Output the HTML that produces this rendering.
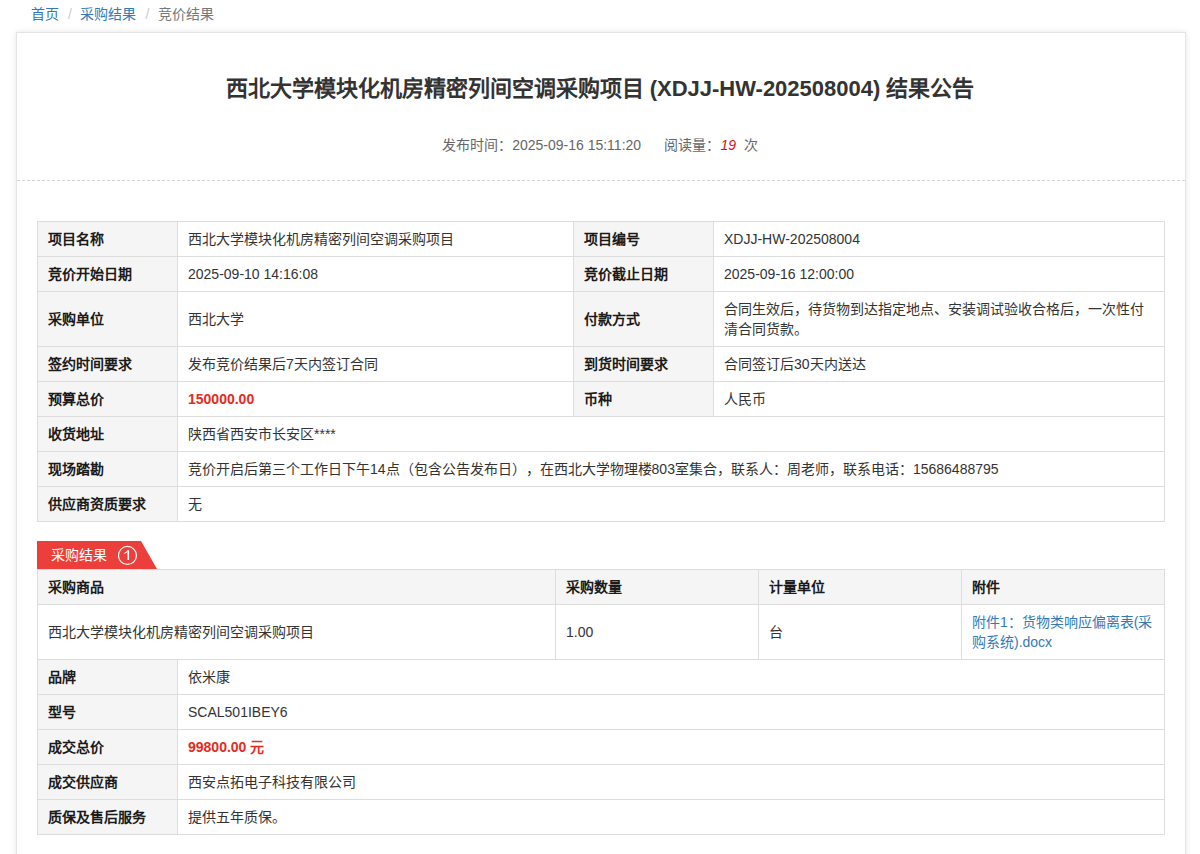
<!DOCTYPE html>
<html lang="zh-CN">
<head>
<meta charset="utf-8">
<style>
*{box-sizing:border-box;}
html,body{margin:0;padding:0;background:#fff;}
body{text-spacing-trim:space-all;font-family:"Liberation Sans",sans-serif;font-size:14px;color:#333;width:1200px;height:854px;overflow:hidden;position:relative;}
.crumb{position:absolute;left:31px;top:4px;font-size:14px;line-height:20px;color:#999;}
.crumb a{color:#337ab7;text-decoration:none;}
.crumb .sep{color:#ccc;padding:0 8.5px 0 9px;}
.crumb .cur{color:#777;}
.box{position:absolute;left:16px;top:32px;width:1170px;height:900px;border:1px solid #e4e4e4;box-shadow:0 0 6px rgba(0,0,0,0.1);background:#fff;}
.title{position:absolute;left:0;right:0;top:73px;text-align:center;font-size:22px;font-weight:bold;color:#333;line-height:32px;}
.meta{position:absolute;left:0;right:0;top:135px;text-align:center;font-size:14px;color:#666;line-height:20px;}
.meta i{color:#d6101a;}
.dash{position:absolute;left:17px;top:180px;width:1168px;border-top:1px dashed #d5d5d5;}
table{position:absolute;border-collapse:collapse;table-layout:fixed;}
td{border:1px solid #ddd;padding:0 10px;font-size:14px;line-height:20px;color:#333;}
td.h{background:#f5f5f5;font-weight:bold;color:#1a1a1a;}
.red{color:#e62a22;font-weight:bold;}
.t1{left:37px;top:221px;width:1128px;}
.tab{position:absolute;left:37px;top:541px;height:28px;}
.t2{left:37px;top:569px;width:1128px;}
.tabtxt{position:absolute;left:51px;top:545px;font-size:14px;line-height:20px;color:#fff;}
.tabnum{position:absolute;left:118px;top:546px;width:19px;text-align:center;font-size:13px;line-height:18px;color:#fff;}
a.lnk{color:#337ab7;text-decoration:none;}
</style>
</head>
<body>
<div class="crumb"><a>首页</a><span class="sep">/</span><a>采购结果</a><span class="sep">/</span><span class="cur">竞价结果</span></div>
<div class="box"></div>
<div class="title">西北大学模块化机房精密列间空调采购项目 (XDJJ-HW-202508004) 结果公告</div>
<div class="meta">发布时间：2025-09-16 15:11:20&nbsp;&nbsp;&nbsp;&nbsp;&nbsp;&nbsp;阅读量：<i>19</i>&nbsp;&nbsp;次</div>
<div class="dash"></div>
<table class="t1">
<colgroup><col style="width:140px"><col style="width:396px"><col style="width:140px"><col></colgroup>
<tr style="height:35px"><td class="h">项目名称</td><td>西北大学模块化机房精密列间空调采购项目</td><td class="h">项目编号</td><td>XDJJ-HW-202508004</td></tr>
<tr style="height:35px"><td class="h">竞价开始日期</td><td>2025-09-10 14:16:08</td><td class="h">竞价截止日期</td><td>2025-09-16 12:00:00</td></tr>
<tr style="height:55px"><td class="h">采购单位</td><td>西北大学</td><td class="h">付款方式</td><td>合同生效后，待货物到达指定地点、安装调试验收合格后，一次性付清合同货款。</td></tr>
<tr style="height:35px"><td class="h">签约时间要求</td><td>发布竞价结果后7天内签订合同</td><td class="h">到货时间要求</td><td>合同签订后30天内送达</td></tr>
<tr style="height:35px"><td class="h">预算总价</td><td><span class="red">150000.00</span></td><td class="h">币种</td><td>人民币</td></tr>
<tr style="height:35px"><td class="h">收货地址</td><td colspan="3">陕西省西安市长安区****</td></tr>
<tr style="height:35px"><td class="h">现场踏勘</td><td colspan="3">竞价开启后第三个工作日下午14点（包含公告发布日），在西北大学物理楼803室集合，联系人：周老师，联系电话：15686488795</td></tr>
<tr style="height:35px"><td class="h">供应商资质要求</td><td colspan="3">无</td></tr>
</table>
<svg class="tab" width="121" height="28" viewBox="0 0 121 28"><polygon points="0,0 104,0 120,28 0,28" fill="#ec3e3a"/><circle cx="90.45" cy="14.45" r="9" fill="none" stroke="#fff" stroke-width="1.2"/><path d="M91.3 9.3 V19" fill="none" stroke="#fff" stroke-width="1.6"/><path d="M91.2 9.5 Q89.8 11.5 87.3 12.4" fill="none" stroke="#fff" stroke-width="1.1"/></svg>
<div class="tabtxt">采购结果</div>
<table class="t2">
<colgroup><col style="width:140px"><col style="width:378px"><col style="width:203px"><col style="width:203px"><col></colgroup>
<tr style="height:35px"><td class="h" colspan="2">采购商品</td><td class="h">采购数量</td><td class="h">计量单位</td><td class="h">附件</td></tr>
<tr style="height:55px"><td colspan="2">西北大学模块化机房精密列间空调采购项目</td><td>1.00</td><td>台</td><td><a class="lnk">附件1：货物类响应偏离表(采购系统).docx</a></td></tr>
<tr style="height:35px"><td class="h">品牌</td><td colspan="4">依米康</td></tr>
<tr style="height:35px"><td class="h">型号</td><td colspan="4">SCAL501IBEY6</td></tr>
<tr style="height:35px"><td class="h">成交总价</td><td colspan="4"><span class="red">99800.00 元</span></td></tr>
<tr style="height:35px"><td class="h">成交供应商</td><td colspan="4">西安点拓电子科技有限公司</td></tr>
<tr style="height:35px"><td class="h">质保及售后服务</td><td colspan="4">提供五年质保。</td></tr>
</table>
</body>
</html>
